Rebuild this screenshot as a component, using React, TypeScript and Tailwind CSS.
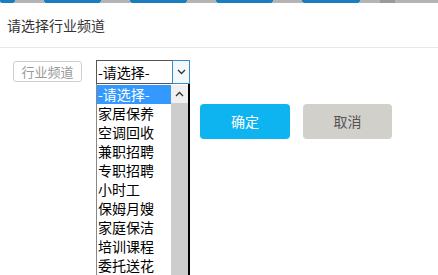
import React from "react";

const options = [
  "-请选择-",
  "家居保养",
  "空调回收",
  "兼职招聘",
  "专职招聘",
  "小时工",
  "保姆月嫂",
  "家庭保洁",
  "培训课程",
  "委托送花",
];

// top strip: [width, kind]
const strip: [number, "b" | "g" | "d"][] = [
  [15, "b"],
  [29, "g"],
  [57, "b"],
  [29, "g"],
  [57, "b"],
  [29, "g"],
  [57, "b"],
  [29, "g"],
  [58, "b"],
  [20, "g"],
  [15, "d"],
  [43, "g"],
];

const stripColor = {
  b: "bg-[#1a7dc0] rounded-b-[2px]",
  g: "bg-[#b4b4b4]",
  d: "bg-[#9a9a9a]",
};

const Chevron = ({ up }: { up?: boolean }) => (
  <svg width="9" height="6" viewBox="0 0 9 6" fill="none">
    <path
      d={up ? "M1 5L4.5 1.5L8 5" : "M1 1L4.5 4.5L8 1"}
      stroke="#333"
      strokeWidth="1.3"
    />
  </svg>
);

const App = () => {
  return (
    <main
      className="w-[438px] h-[275px] overflow-hidden bg-white text-[#333]"
      style={{ fontFamily: '"Noto Sans CJK SC", "Noto Sans", sans-serif' }}
    >
      <div className="flex h-[3px]">
        {strip.map(([w, k], i) => (
          <div key={i} className={stripColor[k]} style={{ width: w }} />
        ))}
      </div>

      <div className="h-[45px] flex items-center pl-[7px] border-b border-[#e8e8e8] text-[14px]">
        请选择行业频道
      </div>

      <div className="flex items-start pt-[12px] pl-[13px]">
        <div className="w-[69px] h-[21px] mt-[1px] border border-[#cfcfcf] rounded-[3px] text-[#999] text-[13px] flex items-center justify-center">
          行业频道
        </div>

        <div className="relative ml-[14px] w-[94px]">
          <div className="h-[24px] flex border border-[#555] bg-white">
            <div className="flex-1 flex items-center pl-[1px] text-[14px] text-black">
              -请选择-
            </div>
            <div className="w-[18px] -my-px -mr-px border border-[#3c8ac4] bg-[#f2f8fc] flex items-center justify-center">
              <Chevron />
            </div>
          </div>

          <div className="absolute left-0 top-[24px] w-[94px] h-[200px] flex bg-white border-l border-[#888] border-r-2 border-r-black">
            <div className="flex-1 pt-[1px]">
              {options.map((o, i) => (
                <div
                  key={o}
                  className={
                    "h-[19px] leading-[19px] pl-[1px] text-[14px] " +
                    (i === 0 ? "bg-[#3399ff] text-white" : "text-black")
                  }
                >
                  {o}
                </div>
              ))}
            </div>
            <div className="w-[17px] flex flex-col pt-[1px]">
              <div className="h-[18px] bg-[#f0f0f0] flex items-center justify-center">
                <Chevron up />
              </div>
              <div className="flex-1 bg-[#cdcdcd]" />
            </div>
          </div>
        </div>
      </div>

      <div className="flex gap-[13px] pl-[200px] mt-[20px]">
        <button className="w-[90px] h-[35px] rounded-[4px] bg-[#0db4ef] text-white text-[14px]">
          确定
        </button>
        <button className="w-[89px] h-[35px] rounded-[4px] bg-[#d2d0cb] text-[#555] text-[14px]">
          取消
        </button>
      </div>
    </main>
  );
};

export default App;
